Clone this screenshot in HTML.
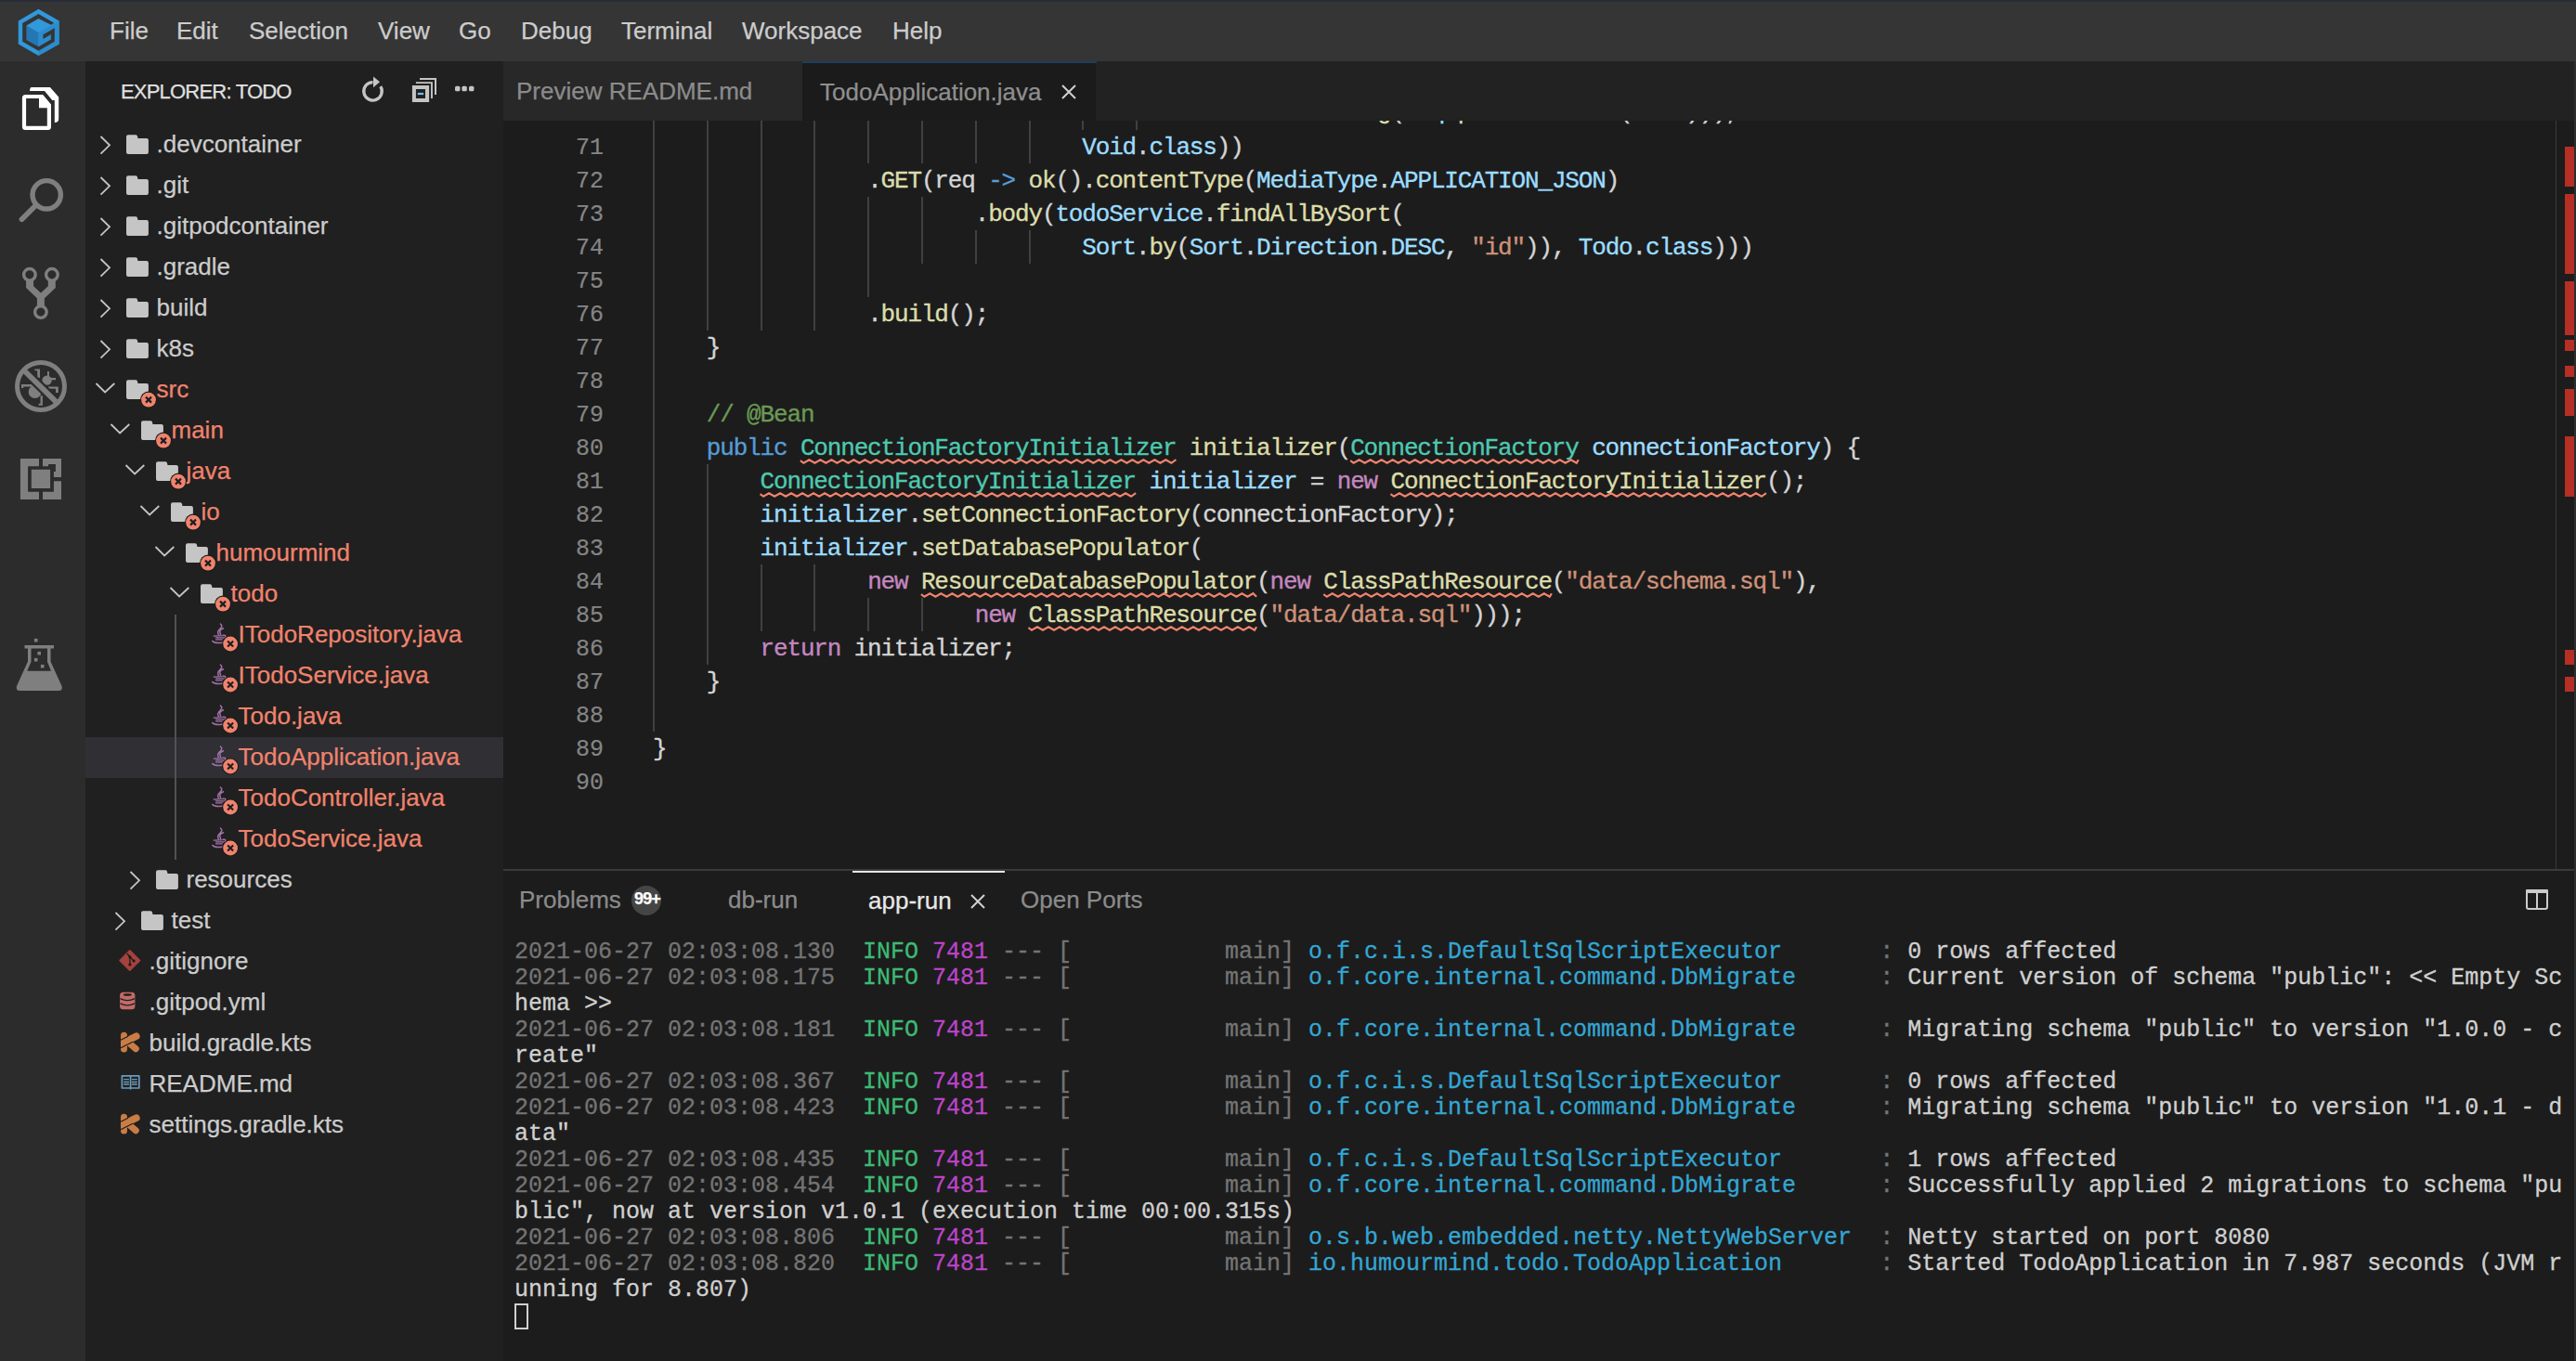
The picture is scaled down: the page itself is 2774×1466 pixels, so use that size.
<!DOCTYPE html>
<html><head><meta charset="utf-8"><style>
*{margin:0;padding:0;box-sizing:border-box}
html,body{width:2774px;height:1466px;overflow:hidden;background:#1c1c1c}
body{position:relative;font-family:"Liberation Sans",sans-serif}
.a{position:absolute}
.ui{font-family:"Liberation Sans",sans-serif;font-size:26px;white-space:pre;-webkit-text-stroke:0.25px currentColor}
.mono{font-family:"Liberation Mono",monospace;white-space:pre}
.cl{position:absolute;left:0;height:36px;line-height:36px;font-size:26px;letter-spacing:-1.158px;-webkit-text-stroke:0.35px currentColor}
.tl{position:absolute;left:0;height:28px;line-height:28px;font-size:25px;letter-spacing:-0.002px;-webkit-text-stroke:0.3px currentColor}
.sq{text-decoration:underline wavy #f48771;text-decoration-thickness:2px;text-underline-offset:6px;text-decoration-skip-ink:none}
</style></head><body>
<div class="a" style="left:0px;top:0px;width:2774px;height:2px;background:#282c3a;"></div>
<div class="a" style="left:0px;top:2px;width:2774px;height:64px;background:#353535;"></div>
<div class="a" style="left:0px;top:66px;width:92px;height:1400px;background:#2c2c2c;"></div>
<div class="a" style="left:92px;top:66px;width:450px;height:1400px;background:#202020;"></div>
<div class="a" style="left:542px;top:66px;width:2232px;height:64px;background:#222222;"></div>
<div class="a" style="left:542px;top:66px;width:322px;height:64px;background:#282828;"></div>
<div class="a" style="left:864px;top:66px;width:316px;height:64px;background:#1b1b1b;"></div>
<div class="a" style="left:864px;top:66px;width:317px;height:2px;background:#1c3e5c;"></div>
<div class="a" style="left:542px;top:130px;width:2232px;height:806px;background:#1c1c1c;"></div>
<div class="a" style="left:542px;top:936px;width:2232px;height:530px;background:#1c1c1c;"></div>
<div class="a" style="left:542px;top:936px;width:2230px;height:2px;background:#3a3a3a;"></div>
<div class="a" style="left:918px;top:938px;width:164px;height:2px;background:#e7e7e7;"></div>
<div class="a" style="left:2752px;top:130px;width:1px;height:806px;background:#3a3a3a;"></div>
<div class="a" style="left:2772px;top:66px;width:2px;height:1400px;background:#2e2e2e;"></div>
<div class="a" style="left:2762px;top:158px;width:10px;height:43px;background:#b52f25;"></div>
<div class="a" style="left:2762px;top:209px;width:10px;height:86px;background:#b52f25;"></div>
<div class="a" style="left:2762px;top:303px;width:10px;height:58px;background:#b52f25;"></div>
<div class="a" style="left:2762px;top:366px;width:10px;height:12px;background:#b52f25;"></div>
<div class="a" style="left:2762px;top:394px;width:10px;height:12px;background:#b52f25;"></div>
<div class="a" style="left:2762px;top:419px;width:10px;height:29px;background:#b52f25;"></div>
<div class="a" style="left:2762px;top:470px;width:10px;height:65px;background:#b52f25;"></div>
<div class="a" style="left:2762px;top:700px;width:10px;height:16px;background:#b52f25;"></div>
<div class="a" style="left:2762px;top:729px;width:10px;height:16px;background:#b52f25;"></div>
<div class="a" style="left:92px;top:794px;width:450px;height:44px;background:#2f2f34;"></div>
<div class="a" style="left:188px;top:662px;width:2px;height:264px;background:#525252;"></div>
<div class="a ui" style="left:118px;top:17px;line-height:32px;color:#cccccc">File</div>
<div class="a ui" style="left:190px;top:17px;line-height:32px;color:#cccccc">Edit</div>
<div class="a ui" style="left:268px;top:17px;line-height:32px;color:#cccccc">Selection</div>
<div class="a ui" style="left:407px;top:17px;line-height:32px;color:#cccccc">View</div>
<div class="a ui" style="left:494px;top:17px;line-height:32px;color:#cccccc">Go</div>
<div class="a ui" style="left:561px;top:17px;line-height:32px;color:#cccccc">Debug</div>
<div class="a ui" style="left:669px;top:17px;line-height:32px;color:#cccccc">Terminal</div>
<div class="a ui" style="left:799px;top:17px;line-height:32px;color:#cccccc">Workspace</div>
<div class="a ui" style="left:961px;top:17px;line-height:32px;color:#cccccc">Help</div>
<div class="a ui" style="left:130px;top:83px;font-size:22px;line-height:32px;letter-spacing:-0.8px;color:#e0e0e0">EXPLORER: TODO</div>
<div class="a ui" style="left:556px;top:82px;line-height:32px;color:#8b8b8b">Preview README.md</div>
<div class="a ui" style="left:883px;top:83px;line-height:32px;color:#8f8f8f">TodoApplication.java</div>
<div class="a ui" style="left:168.5px;top:139px;line-height:32px;color:#cccccc">.devcontainer</div>
<div class="a ui" style="left:168.5px;top:183px;line-height:32px;color:#cccccc">.git</div>
<div class="a ui" style="left:168.5px;top:227px;line-height:32px;color:#cccccc">.gitpodcontainer</div>
<div class="a ui" style="left:168.5px;top:271px;line-height:32px;color:#cccccc">.gradle</div>
<div class="a ui" style="left:168.5px;top:315px;line-height:32px;color:#cccccc">build</div>
<div class="a ui" style="left:168.5px;top:359px;line-height:32px;color:#cccccc">k8s</div>
<div class="a ui" style="left:168.5px;top:403px;line-height:32px;color:#f0836d">src</div>
<div class="a ui" style="left:184.5px;top:447px;line-height:32px;color:#f0836d">main</div>
<div class="a ui" style="left:200.5px;top:491px;line-height:32px;color:#f0836d">java</div>
<div class="a ui" style="left:216.5px;top:535px;line-height:32px;color:#f0836d">io</div>
<div class="a ui" style="left:232.5px;top:579px;line-height:32px;color:#f0836d">humourmind</div>
<div class="a ui" style="left:248.5px;top:623px;line-height:32px;color:#f0836d">todo</div>
<div class="a ui" style="left:256.5px;top:667px;line-height:32px;color:#f0836d">ITodoRepository.java</div>
<div class="a ui" style="left:256.5px;top:711px;line-height:32px;color:#f0836d">ITodoService.java</div>
<div class="a ui" style="left:256.5px;top:755px;line-height:32px;color:#f0836d">Todo.java</div>
<div class="a ui" style="left:256.5px;top:799px;line-height:32px;color:#f0836d">TodoApplication.java</div>
<div class="a ui" style="left:256.5px;top:843px;line-height:32px;color:#f0836d">TodoController.java</div>
<div class="a ui" style="left:256.5px;top:887px;line-height:32px;color:#f0836d">TodoService.java</div>
<div class="a ui" style="left:200.5px;top:931px;line-height:32px;color:#cccccc">resources</div>
<div class="a ui" style="left:184.5px;top:975px;line-height:32px;color:#cccccc">test</div>
<div class="a ui" style="left:160.5px;top:1019px;line-height:32px;color:#cccccc">.gitignore</div>
<div class="a ui" style="left:160.5px;top:1063px;line-height:32px;color:#cccccc">.gitpod.yml</div>
<div class="a ui" style="left:160.5px;top:1107px;line-height:32px;color:#cccccc">build.gradle.kts</div>
<div class="a ui" style="left:160.5px;top:1151px;line-height:32px;color:#cccccc">README.md</div>
<div class="a ui" style="left:160.5px;top:1195px;line-height:32px;color:#cccccc">settings.gradle.kts</div>
<div class="a" style="left:542px;top:130px;width:2210px;height:806px;overflow:hidden">
<div class="a mono" style="left:18px;width:90px;text-align:right;top:-24.5px;height:36px;line-height:36px;font-size:25px;-webkit-text-stroke:0.2px currentColor;color:#858585">70</div>
<div class="a" style="left:161.0px;top:-26px;width:2px;height:36px;background:#404040"></div>
<div class="a" style="left:218.8px;top:-26px;width:2px;height:36px;background:#404040"></div>
<div class="a" style="left:276.6px;top:-26px;width:2px;height:36px;background:#404040"></div>
<div class="a" style="left:334.4px;top:-26px;width:2px;height:36px;background:#404040"></div>
<div class="a" style="left:392.1px;top:-26px;width:2px;height:36px;background:#404040"></div>
<div class="a" style="left:449.9px;top:-26px;width:2px;height:36px;background:#404040"></div>
<div class="a" style="left:507.7px;top:-26px;width:2px;height:36px;background:#404040"></div>
<div class="a" style="left:565.5px;top:-26px;width:2px;height:36px;background:#404040"></div>
<div class="a" style="left:623.3px;top:-26px;width:2px;height:36px;background:#404040"></div>
<div class="a" style="left:681.1px;top:-26px;width:2px;height:36px;background:#404040"></div>
<div class="mono cl" style="left:161.00px;top:-27.0px"><span style="color:#d4d4d4">                                                      </span><span style="color:#dcdcaa">g</span><span style="color:#d4d4d4">(  </span><span style="color:#9cdcfe">q </span><span style="color:#dcdcaa">p           </span><span style="color:#d4d4d4">(    ))),</span></div>
<div class="a mono" style="left:18px;width:90px;text-align:right;top:11.5px;height:36px;line-height:36px;font-size:25px;-webkit-text-stroke:0.2px currentColor;color:#858585">71</div>
<div class="a" style="left:161.0px;top:10px;width:2px;height:36px;background:#404040"></div>
<div class="a" style="left:218.8px;top:10px;width:2px;height:36px;background:#404040"></div>
<div class="a" style="left:276.6px;top:10px;width:2px;height:36px;background:#404040"></div>
<div class="a" style="left:334.4px;top:10px;width:2px;height:36px;background:#404040"></div>
<div class="a" style="left:392.1px;top:10px;width:2px;height:36px;background:#404040"></div>
<div class="a" style="left:449.9px;top:10px;width:2px;height:36px;background:#404040"></div>
<div class="a" style="left:507.7px;top:10px;width:2px;height:36px;background:#404040"></div>
<div class="a" style="left:565.5px;top:10px;width:2px;height:36px;background:#404040"></div>
<div class="mono cl" style="left:623.27px;top:11.0px"><span style="color:#9cdcfe">Void</span><span style="color:#d4d4d4">.</span><span style="color:#9cdcfe">class</span><span style="color:#d4d4d4">))</span></div>
<div class="a mono" style="left:18px;width:90px;text-align:right;top:47.5px;height:36px;line-height:36px;font-size:25px;-webkit-text-stroke:0.2px currentColor;color:#858585">72</div>
<div class="a" style="left:161.0px;top:46px;width:2px;height:36px;background:#404040"></div>
<div class="a" style="left:218.8px;top:46px;width:2px;height:36px;background:#404040"></div>
<div class="a" style="left:276.6px;top:46px;width:2px;height:36px;background:#404040"></div>
<div class="a" style="left:334.4px;top:46px;width:2px;height:36px;background:#404040"></div>
<div class="mono cl" style="left:392.14px;top:47.0px"><span style="color:#d4d4d4">.</span><span style="color:#dcdcaa">GET</span><span style="color:#d4d4d4">(req </span><span style="color:#569cd6">-&gt;</span><span style="color:#d4d4d4"> </span><span style="color:#dcdcaa">ok</span><span style="color:#d4d4d4">().</span><span style="color:#dcdcaa">contentType</span><span style="color:#d4d4d4">(</span><span style="color:#9cdcfe">MediaType</span><span style="color:#d4d4d4">.</span><span style="color:#9cdcfe">APPLICATION_JSON</span><span style="color:#d4d4d4">)</span></div>
<div class="a mono" style="left:18px;width:90px;text-align:right;top:83.5px;height:36px;line-height:36px;font-size:25px;-webkit-text-stroke:0.2px currentColor;color:#858585">73</div>
<div class="a" style="left:161.0px;top:82px;width:2px;height:36px;background:#404040"></div>
<div class="a" style="left:218.8px;top:82px;width:2px;height:36px;background:#404040"></div>
<div class="a" style="left:276.6px;top:82px;width:2px;height:36px;background:#404040"></div>
<div class="a" style="left:334.4px;top:82px;width:2px;height:36px;background:#404040"></div>
<div class="a" style="left:392.1px;top:82px;width:2px;height:36px;background:#404040"></div>
<div class="a" style="left:449.9px;top:82px;width:2px;height:36px;background:#404040"></div>
<div class="mono cl" style="left:507.70px;top:83.0px"><span style="color:#d4d4d4">.</span><span style="color:#dcdcaa">body</span><span style="color:#d4d4d4">(</span><span style="color:#9cdcfe">todoService</span><span style="color:#d4d4d4">.</span><span style="color:#dcdcaa">findAllBySort</span><span style="color:#d4d4d4">(</span></div>
<div class="a mono" style="left:18px;width:90px;text-align:right;top:119.5px;height:36px;line-height:36px;font-size:25px;-webkit-text-stroke:0.2px currentColor;color:#858585">74</div>
<div class="a" style="left:161.0px;top:118px;width:2px;height:36px;background:#404040"></div>
<div class="a" style="left:218.8px;top:118px;width:2px;height:36px;background:#404040"></div>
<div class="a" style="left:276.6px;top:118px;width:2px;height:36px;background:#404040"></div>
<div class="a" style="left:334.4px;top:118px;width:2px;height:36px;background:#404040"></div>
<div class="a" style="left:392.1px;top:118px;width:2px;height:36px;background:#404040"></div>
<div class="a" style="left:449.9px;top:118px;width:2px;height:36px;background:#404040"></div>
<div class="a" style="left:507.7px;top:118px;width:2px;height:36px;background:#404040"></div>
<div class="a" style="left:565.5px;top:118px;width:2px;height:36px;background:#404040"></div>
<div class="mono cl" style="left:623.27px;top:119.0px"><span style="color:#9cdcfe">Sort</span><span style="color:#d4d4d4">.</span><span style="color:#dcdcaa">by</span><span style="color:#d4d4d4">(</span><span style="color:#9cdcfe">Sort</span><span style="color:#d4d4d4">.</span><span style="color:#9cdcfe">Direction</span><span style="color:#d4d4d4">.</span><span style="color:#9cdcfe">DESC</span><span style="color:#d4d4d4">, </span><span style="color:#ce9178">&quot;id&quot;</span><span style="color:#d4d4d4">)), </span><span style="color:#9cdcfe">Todo</span><span style="color:#d4d4d4">.</span><span style="color:#9cdcfe">class</span><span style="color:#d4d4d4">)))</span></div>
<div class="a mono" style="left:18px;width:90px;text-align:right;top:155.5px;height:36px;line-height:36px;font-size:25px;-webkit-text-stroke:0.2px currentColor;color:#858585">75</div>
<div class="a" style="left:161.0px;top:154px;width:2px;height:36px;background:#404040"></div>
<div class="a" style="left:218.8px;top:154px;width:2px;height:36px;background:#404040"></div>
<div class="a" style="left:276.6px;top:154px;width:2px;height:36px;background:#404040"></div>
<div class="a" style="left:334.4px;top:154px;width:2px;height:36px;background:#404040"></div>
<div class="a" style="left:392.1px;top:154px;width:2px;height:36px;background:#404040"></div>
<div class="a mono" style="left:18px;width:90px;text-align:right;top:191.5px;height:36px;line-height:36px;font-size:25px;-webkit-text-stroke:0.2px currentColor;color:#858585">76</div>
<div class="a" style="left:161.0px;top:190px;width:2px;height:36px;background:#404040"></div>
<div class="a" style="left:218.8px;top:190px;width:2px;height:36px;background:#404040"></div>
<div class="a" style="left:276.6px;top:190px;width:2px;height:36px;background:#404040"></div>
<div class="a" style="left:334.4px;top:190px;width:2px;height:36px;background:#404040"></div>
<div class="mono cl" style="left:392.14px;top:191.0px"><span style="color:#d4d4d4">.</span><span style="color:#dcdcaa">build</span><span style="color:#d4d4d4">();</span></div>
<div class="a mono" style="left:18px;width:90px;text-align:right;top:227.5px;height:36px;line-height:36px;font-size:25px;-webkit-text-stroke:0.2px currentColor;color:#858585">77</div>
<div class="a" style="left:161.0px;top:226px;width:2px;height:36px;background:#404040"></div>
<div class="mono cl" style="left:218.78px;top:227.0px"><span style="color:#d4d4d4">}</span></div>
<div class="a mono" style="left:18px;width:90px;text-align:right;top:263.5px;height:36px;line-height:36px;font-size:25px;-webkit-text-stroke:0.2px currentColor;color:#858585">78</div>
<div class="a" style="left:161.0px;top:262px;width:2px;height:36px;background:#404040"></div>
<div class="a mono" style="left:18px;width:90px;text-align:right;top:299.5px;height:36px;line-height:36px;font-size:25px;-webkit-text-stroke:0.2px currentColor;color:#858585">79</div>
<div class="a" style="left:161.0px;top:298px;width:2px;height:36px;background:#404040"></div>
<div class="mono cl" style="left:218.78px;top:299.0px"><span style="color:#6a9955">// @Bean</span></div>
<div class="a mono" style="left:18px;width:90px;text-align:right;top:335.5px;height:36px;line-height:36px;font-size:25px;-webkit-text-stroke:0.2px currentColor;color:#858585">80</div>
<div class="a" style="left:161.0px;top:334px;width:2px;height:36px;background:#404040"></div>
<div class="mono cl" style="left:218.78px;top:335.0px"><span style="color:#569cd6">public</span><span style="color:#d4d4d4"> </span><span style="color:#4ec9b0">ConnectionFactoryInitializer</span><span style="color:#d4d4d4"> </span><span style="color:#dcdcaa">initializer</span><span style="color:#d4d4d4">(</span><span style="color:#4ec9b0">ConnectionFactory</span><span style="color:#d4d4d4"> </span><span style="color:#9cdcfe">connectionFactory</span><span style="color:#d4d4d4">) {</span></div>
<div class="a mono" style="left:18px;width:90px;text-align:right;top:371.5px;height:36px;line-height:36px;font-size:25px;-webkit-text-stroke:0.2px currentColor;color:#858585">81</div>
<div class="a" style="left:161.0px;top:370px;width:2px;height:36px;background:#404040"></div>
<div class="a" style="left:218.8px;top:370px;width:2px;height:36px;background:#404040"></div>
<div class="mono cl" style="left:276.57px;top:371.0px"><span style="color:#4ec9b0">ConnectionFactoryInitializer</span><span style="color:#d4d4d4"> </span><span style="color:#9cdcfe">initializer</span><span style="color:#d4d4d4"> = </span><span style="color:#c586c0">new</span><span style="color:#d4d4d4"> </span><span style="color:#dcdcaa">ConnectionFactoryInitializer</span><span style="color:#d4d4d4">();</span></div>
<div class="a mono" style="left:18px;width:90px;text-align:right;top:407.5px;height:36px;line-height:36px;font-size:25px;-webkit-text-stroke:0.2px currentColor;color:#858585">82</div>
<div class="a" style="left:161.0px;top:406px;width:2px;height:36px;background:#404040"></div>
<div class="a" style="left:218.8px;top:406px;width:2px;height:36px;background:#404040"></div>
<div class="mono cl" style="left:276.57px;top:407.0px"><span style="color:#9cdcfe">initializer</span><span style="color:#d4d4d4">.</span><span style="color:#dcdcaa">setConnectionFactory</span><span style="color:#d4d4d4">(connectionFactory);</span></div>
<div class="a mono" style="left:18px;width:90px;text-align:right;top:443.5px;height:36px;line-height:36px;font-size:25px;-webkit-text-stroke:0.2px currentColor;color:#858585">83</div>
<div class="a" style="left:161.0px;top:442px;width:2px;height:36px;background:#404040"></div>
<div class="a" style="left:218.8px;top:442px;width:2px;height:36px;background:#404040"></div>
<div class="mono cl" style="left:276.57px;top:443.0px"><span style="color:#9cdcfe">initializer</span><span style="color:#d4d4d4">.</span><span style="color:#dcdcaa">setDatabasePopulator</span><span style="color:#d4d4d4">(</span></div>
<div class="a mono" style="left:18px;width:90px;text-align:right;top:479.5px;height:36px;line-height:36px;font-size:25px;-webkit-text-stroke:0.2px currentColor;color:#858585">84</div>
<div class="a" style="left:161.0px;top:478px;width:2px;height:36px;background:#404040"></div>
<div class="a" style="left:218.8px;top:478px;width:2px;height:36px;background:#404040"></div>
<div class="a" style="left:276.6px;top:478px;width:2px;height:36px;background:#404040"></div>
<div class="a" style="left:334.4px;top:478px;width:2px;height:36px;background:#404040"></div>
<div class="mono cl" style="left:392.14px;top:479.0px"><span style="color:#c586c0">new</span><span style="color:#d4d4d4"> </span><span style="color:#dcdcaa">ResourceDatabasePopulator</span><span style="color:#d4d4d4">(</span><span style="color:#c586c0">new</span><span style="color:#d4d4d4"> </span><span style="color:#dcdcaa">ClassPathResource</span><span style="color:#d4d4d4">(</span><span style="color:#ce9178">&quot;data/schema.sql&quot;</span><span style="color:#d4d4d4">),</span></div>
<div class="a mono" style="left:18px;width:90px;text-align:right;top:515.5px;height:36px;line-height:36px;font-size:25px;-webkit-text-stroke:0.2px currentColor;color:#858585">85</div>
<div class="a" style="left:161.0px;top:514px;width:2px;height:36px;background:#404040"></div>
<div class="a" style="left:218.8px;top:514px;width:2px;height:36px;background:#404040"></div>
<div class="a" style="left:276.6px;top:514px;width:2px;height:36px;background:#404040"></div>
<div class="a" style="left:334.4px;top:514px;width:2px;height:36px;background:#404040"></div>
<div class="a" style="left:392.1px;top:514px;width:2px;height:36px;background:#404040"></div>
<div class="a" style="left:449.9px;top:514px;width:2px;height:36px;background:#404040"></div>
<div class="mono cl" style="left:507.70px;top:515.0px"><span style="color:#c586c0">new</span><span style="color:#d4d4d4"> </span><span style="color:#dcdcaa">ClassPathResource</span><span style="color:#d4d4d4">(</span><span style="color:#ce9178">&quot;data/data.sql&quot;</span><span style="color:#d4d4d4">)));</span></div>
<div class="a mono" style="left:18px;width:90px;text-align:right;top:551.5px;height:36px;line-height:36px;font-size:25px;-webkit-text-stroke:0.2px currentColor;color:#858585">86</div>
<div class="a" style="left:161.0px;top:550px;width:2px;height:36px;background:#404040"></div>
<div class="a" style="left:218.8px;top:550px;width:2px;height:36px;background:#404040"></div>
<div class="mono cl" style="left:276.57px;top:551.0px"><span style="color:#c586c0">return</span><span style="color:#d4d4d4"> initializer;</span></div>
<div class="a mono" style="left:18px;width:90px;text-align:right;top:587.5px;height:36px;line-height:36px;font-size:25px;-webkit-text-stroke:0.2px currentColor;color:#858585">87</div>
<div class="a" style="left:161.0px;top:586px;width:2px;height:36px;background:#404040"></div>
<div class="mono cl" style="left:218.78px;top:587.0px"><span style="color:#d4d4d4">}</span></div>
<div class="a mono" style="left:18px;width:90px;text-align:right;top:623.5px;height:36px;line-height:36px;font-size:25px;-webkit-text-stroke:0.2px currentColor;color:#858585">88</div>
<div class="a" style="left:161.0px;top:622px;width:2px;height:36px;background:#404040"></div>
<div class="a mono" style="left:18px;width:90px;text-align:right;top:659.5px;height:36px;line-height:36px;font-size:25px;-webkit-text-stroke:0.2px currentColor;color:#858585">89</div>
<div class="mono cl" style="left:161.00px;top:659.0px"><span style="color:#d4d4d4">}</span></div>
<div class="a mono" style="left:18px;width:90px;text-align:right;top:695.5px;height:36px;line-height:36px;font-size:25px;-webkit-text-stroke:0.2px currentColor;color:#858585">90</div>
</div>
<div class="a ui" style="left:559px;top:953px;line-height:32px;color:#8b8b8b">Problems</div>
<div class="a" style="left:680px;top:954px;width:32px;height:32px;border-radius:16px;background:#454545"></div>
<div class="a ui" style="left:681px;top:952px;width:32px;text-align:center;font-size:18px;font-weight:bold;line-height:32px;color:#ffffff;letter-spacing:-0.8px">99+</div>
<div class="a ui" style="left:784px;top:953px;line-height:32px;color:#8b8b8b">db-run</div>
<div class="a ui" style="left:935px;top:954px;line-height:32px;color:#e8e8e8">app-run</div>
<div class="a ui" style="left:1099px;top:953px;line-height:32px;color:#8b8b8b">Open Ports</div>
<div class="mono tl" style="left:554px;top:1012px"><span style="color:#747474">2021-06-27 02:03:08.130</span><span style="color:#d0d0d0">  </span><span style="color:#3dba74">INFO</span><span style="color:#d0d0d0"> </span><span style="color:#bc45c8">7481</span><span style="color:#747474"> --- [           main] </span><span style="color:#34a6d3">o.f.c.i.s.DefaultSqlScriptExecutor      </span><span style="color:#747474"> : </span><span style="color:#d0d0d0">0 rows affected</span></div>
<div class="mono tl" style="left:554px;top:1040px"><span style="color:#747474">2021-06-27 02:03:08.175</span><span style="color:#d0d0d0">  </span><span style="color:#3dba74">INFO</span><span style="color:#d0d0d0"> </span><span style="color:#bc45c8">7481</span><span style="color:#747474"> --- [           main] </span><span style="color:#34a6d3">o.f.core.internal.command.DbMigrate     </span><span style="color:#747474"> : </span><span style="color:#d0d0d0">Current version of schema &quot;public&quot;: &lt;&lt; Empty Sc</span></div>
<div class="mono tl" style="left:554px;top:1068px"><span style="color:#d0d0d0">hema &gt;&gt;</span></div>
<div class="mono tl" style="left:554px;top:1096px"><span style="color:#747474">2021-06-27 02:03:08.181</span><span style="color:#d0d0d0">  </span><span style="color:#3dba74">INFO</span><span style="color:#d0d0d0"> </span><span style="color:#bc45c8">7481</span><span style="color:#747474"> --- [           main] </span><span style="color:#34a6d3">o.f.core.internal.command.DbMigrate     </span><span style="color:#747474"> : </span><span style="color:#d0d0d0">Migrating schema &quot;public&quot; to version &quot;1.0.0 - c</span></div>
<div class="mono tl" style="left:554px;top:1124px"><span style="color:#d0d0d0">reate&quot;</span></div>
<div class="mono tl" style="left:554px;top:1152px"><span style="color:#747474">2021-06-27 02:03:08.367</span><span style="color:#d0d0d0">  </span><span style="color:#3dba74">INFO</span><span style="color:#d0d0d0"> </span><span style="color:#bc45c8">7481</span><span style="color:#747474"> --- [           main] </span><span style="color:#34a6d3">o.f.c.i.s.DefaultSqlScriptExecutor      </span><span style="color:#747474"> : </span><span style="color:#d0d0d0">0 rows affected</span></div>
<div class="mono tl" style="left:554px;top:1180px"><span style="color:#747474">2021-06-27 02:03:08.423</span><span style="color:#d0d0d0">  </span><span style="color:#3dba74">INFO</span><span style="color:#d0d0d0"> </span><span style="color:#bc45c8">7481</span><span style="color:#747474"> --- [           main] </span><span style="color:#34a6d3">o.f.core.internal.command.DbMigrate     </span><span style="color:#747474"> : </span><span style="color:#d0d0d0">Migrating schema &quot;public&quot; to version &quot;1.0.1 - d</span></div>
<div class="mono tl" style="left:554px;top:1208px"><span style="color:#d0d0d0">ata&quot;</span></div>
<div class="mono tl" style="left:554px;top:1236px"><span style="color:#747474">2021-06-27 02:03:08.435</span><span style="color:#d0d0d0">  </span><span style="color:#3dba74">INFO</span><span style="color:#d0d0d0"> </span><span style="color:#bc45c8">7481</span><span style="color:#747474"> --- [           main] </span><span style="color:#34a6d3">o.f.c.i.s.DefaultSqlScriptExecutor      </span><span style="color:#747474"> : </span><span style="color:#d0d0d0">1 rows affected</span></div>
<div class="mono tl" style="left:554px;top:1264px"><span style="color:#747474">2021-06-27 02:03:08.454</span><span style="color:#d0d0d0">  </span><span style="color:#3dba74">INFO</span><span style="color:#d0d0d0"> </span><span style="color:#bc45c8">7481</span><span style="color:#747474"> --- [           main] </span><span style="color:#34a6d3">o.f.core.internal.command.DbMigrate     </span><span style="color:#747474"> : </span><span style="color:#d0d0d0">Successfully applied 2 migrations to schema &quot;pu</span></div>
<div class="mono tl" style="left:554px;top:1292px"><span style="color:#d0d0d0">blic&quot;, now at version v1.0.1 (execution time 00:00.315s)</span></div>
<div class="mono tl" style="left:554px;top:1320px"><span style="color:#747474">2021-06-27 02:03:08.806</span><span style="color:#d0d0d0">  </span><span style="color:#3dba74">INFO</span><span style="color:#d0d0d0"> </span><span style="color:#bc45c8">7481</span><span style="color:#747474"> --- [           main] </span><span style="color:#34a6d3">o.s.b.web.embedded.netty.NettyWebServer </span><span style="color:#747474"> : </span><span style="color:#d0d0d0">Netty started on port 8080</span></div>
<div class="mono tl" style="left:554px;top:1348px"><span style="color:#747474">2021-06-27 02:03:08.820</span><span style="color:#d0d0d0">  </span><span style="color:#3dba74">INFO</span><span style="color:#d0d0d0"> </span><span style="color:#bc45c8">7481</span><span style="color:#747474"> --- [           main] </span><span style="color:#34a6d3">io.humourmind.todo.TodoApplication      </span><span style="color:#747474"> : </span><span style="color:#d0d0d0">Started TodoApplication in 7.987 seconds (JVM r</span></div>
<div class="mono tl" style="left:554px;top:1376px"><span style="color:#d0d0d0">unning for 8.807)</span></div>
<div class="a" style="left:554px;top:1404px;width:15px;height:28px;border:2px solid #d0d0d0"></div>
<svg class="a" style="left:0;top:0" width="2774" height="1466" viewBox="0 0 2774 1466">
<path d="M41.5,9.8 L63.7,22.4 L63.7,47.6 L41.5,60.1 L19.75,47.6 L19.75,22.4 Z" fill="#3198da"/>
<path d="M41.5,35 L41.5,50.3 L28.5,42.9 L28.5,27.5 Z" fill="#2577b3"/>
<path d="M41.5,35 L41.5,60.1 L63.7,47.6 L63.7,22.4 Z" fill="#2a88c8" opacity="0.7"/>
<path d="M41.5,15 L58.3,24.8 L55,26.7 L41.5,20.1 L28.5,27.5 L28.5,42.9 L41.5,50.3 L54.9,42.6 L54.9,37.1 L46.4,42 L46.4,37.3 L54.9,32.4 L58.8,30.1 L58.8,44.8 L41.5,54.8 L24.2,44.8 L24.2,25 Z" fill="#353535"/>
<path d="M34,93.9 H53.9 L63.2,104.5 V128 Q63.2,132 58.8,132 V108 H56.3 L48,97.9 H32.1 Q32.1,93.9 34,93.9 Z" fill="#ffffff"/>
<path fill-rule="evenodd" d="M27.4,101.9 H46.2 L55,112.5 V136.5 Q55,140 51.5,140 H27.4 Q23.9,140 23.9,136.5 V105.4 Q23.9,101.9 27.4,101.9 Z M28.1,106.1 V135.8 H50.8 V116.2 H42 V106.1 Z" fill="#ffffff"/>
<circle cx="50.2" cy="209.8" r="15.2" fill="none" stroke="#7f7f7f" stroke-width="5.4"/>
<line x1="38.5" y1="221.2" x2="23.5" y2="236.2" stroke="#7f7f7f" stroke-width="5.7" stroke-linecap="round"/>
<circle cx="31.9" cy="295.8" r="6.3" fill="none" stroke="#7f7f7f" stroke-width="3.4"/>
<circle cx="55.9" cy="295.8" r="6.3" fill="none" stroke="#7f7f7f" stroke-width="3.4"/>
<circle cx="43.9" cy="336.1" r="6.3" fill="none" stroke="#7f7f7f" stroke-width="3.4"/>
<path d="M28.1,301 H36.1 V308.2 L44,315.5 L51.8,308.2 V301 H59.8 V309.9 L47.9,321.3 V330 H39.9 V321.3 L28.1,309.9 Z" fill="#7f7f7f"/>
<circle cx="50.6" cy="409.6" r="5.2" fill="#7f7f7f"/>
<circle cx="37.6" cy="422" r="6.9" fill="#7f7f7f"/>
<path d="M23,414 H35.5 V416.4 H25.2 V418 H23 Z M37.4,397.4 H43 V407 H40.2 V399.2 H37.4 Z M51,400 H52.9 V406 H51 Z M54,407 H60 V409.2 H54 Z M52,416.4 H62.8 V423 H60 V418.8 H52 Z M43.5,426.3 H45.9 V436.7 H41.6 V434.8 H43.5 Z" fill="#7f7f7f"/>
<line x1="26.1" y1="399.3" x2="60.2" y2="432.6" stroke="#2c2c2c" stroke-width="10.5"/>
<circle cx="44" cy="416" r="25.5" fill="none" stroke="#7f7f7f" stroke-width="5"/>
<line x1="26.1" y1="399.3" x2="60.2" y2="432.6" stroke="#7f7f7f" stroke-width="5.8"/>
<path d="M21.9,493.9 H42 V502.3 H30.1 V529.7 H42 V538 H21.9 Z M46,529.7 H57.9 V518.2 H66 V538 H46 Z M46,493.9 H66 V514 H57.9 V508 H59.9 V500.1 H52.1 V502.3 H46 Z M33.8,505.8 H54.1 V526.1 H33.8 Z" fill="#7f7f7f"/>
<path d="M26.5,695.1 H58 V698.5 H54.5 V712.5 L66.5,739 Q68,744 63,744 H21.5 Q16.5,744 18,739 L30,712.5 V698.5 H26.5 Z M33.5,698.5 V713 L29.2,722.7 H55 L51,713 V698.5 Z" fill="#7f7f7f" fill-rule="evenodd"/>
<rect x="36.900000000000006" y="687.9000000000001" width="3.6" height="3.6" fill="#7f7f7f"/>
<rect x="40.400000000000006" y="701.9000000000001" width="3.6" height="3.6" fill="#7f7f7f"/>
<rect x="36.900000000000006" y="708.9000000000001" width="3.6" height="3.6" fill="#7f7f7f"/>
<rect x="43.900000000000006" y="715.9000000000001" width="3.6" height="3.6" fill="#7f7f7f"/>
<path d="M409.8,93.2 A9.75,9.75 0 1 1 401.5,88.55" fill="none" stroke="#c5c5c5" stroke-width="3.3"/>
<path d="M402,82.5 L409,88.3 L402,94.2 Z" fill="#c5c5c5"/>
<path fill-rule="evenodd" d="M443.9,92 H462.1 V110 H443.9 Z M447.9,96.1 V105.9 H458 V96.1 Z" fill="#c5c5c5"/>
<rect x="449.8" y="99.9" width="6.3" height="2.2" fill="#75beff"/>
<path d="M447.9,88.2 H465.9 V105.9 H464 V90.1 H447.9 Z" fill="#c5c5c5"/>
<path d="M452,84 H470 V102 H468 V86 H452 Z" fill="#c5c5c5"/>
<rect x="490" y="92.8" width="5.4" height="5.5" rx="1.5" fill="#c5c5c5"/>
<rect x="497.4" y="92.8" width="5.4" height="5.5" rx="1.5" fill="#c5c5c5"/>
<rect x="505" y="92.8" width="5.4" height="5.5" rx="1.5" fill="#c5c5c5"/>
<path d="M1144,92 L1158,106 M1158,92 L1144,106" stroke="#d0d0d0" stroke-width="2"/>
<path d="M1046,964 L1060,978 M1060,964 L1046,978" stroke="#d0d0d0" stroke-width="2"/>
<rect x="2721" y="959" width="22" height="20" rx="2" fill="none" stroke="#cccccc" stroke-width="2"/>
<rect x="2720" y="958" width="24" height="4" rx="1" fill="#cccccc"/>
<rect x="2731" y="959" width="2" height="20" fill="#cccccc"/>
<polyline points="861.9,496.2 865.4,498.8 871.4,495.2 877.4,498.8 883.4,495.2 889.4,498.8 895.4,495.2 901.4,498.8 907.4,495.2 913.4,498.8 919.4,495.2 925.4,498.8 931.4,495.2 937.4,498.8 943.4,495.2 949.4,498.8 955.4,495.2 961.4,498.8 967.4,495.2 973.4,498.8 979.4,495.2 985.4,498.8 991.4,495.2 997.4,498.8 1003.4,495.2 1009.4,498.8 1015.4,495.2 1021.4,498.8 1027.4,495.2 1033.4,498.8 1039.4,495.2 1045.4,498.8 1051.4,495.2 1057.4,498.8 1063.4,495.2 1069.4,498.8 1075.4,495.2 1081.4,498.8 1087.4,495.2 1093.4,498.8 1099.4,495.2 1105.4,498.8 1111.4,495.2 1117.4,498.8 1123.4,495.2 1129.4,498.8 1135.4,495.2 1141.4,498.8 1147.4,495.2 1153.4,498.8 1159.4,495.2 1165.4,498.8 1171.4,495.2 1177.4,498.8 1183.4,495.2 1189.4,498.8 1195.4,495.2 1201.4,498.8 1207.4,495.2 1213.4,498.8 1219.4,495.2 1225.4,498.8 1231.4,495.2 1237.4,498.8 1243.4,495.2 1249.4,498.8 1255.4,495.2 1261.4,498.8 1266.4,495.2" fill="none" stroke="#f0836d" stroke-width="2.2" stroke-linejoin="miter"/>
<polyline points="1454.2,496.2 1457.7,498.8 1463.7,495.2 1469.7,498.8 1475.7,495.2 1481.7,498.8 1487.7,495.2 1493.7,498.8 1499.7,495.2 1505.7,498.8 1511.7,495.2 1517.7,498.8 1523.7,495.2 1529.7,498.8 1535.7,495.2 1541.7,498.8 1547.7,495.2 1553.7,498.8 1559.7,495.2 1565.7,498.8 1571.7,495.2 1577.7,498.8 1583.7,495.2 1589.7,498.8 1595.7,495.2 1601.7,498.8 1607.7,495.2 1613.7,498.8 1619.7,495.2 1625.7,498.8 1631.7,495.2 1637.7,498.8 1643.7,495.2 1649.7,498.8 1655.7,495.2 1661.7,498.8 1667.7,495.2 1673.7,498.8 1679.7,495.2 1685.7,498.8 1691.7,495.2 1697.7,498.8 1699.8,495.2" fill="none" stroke="#f0836d" stroke-width="2.2" stroke-linejoin="miter"/>
<polyline points="818.6,532.2 822.1,534.8 828.1,531.2 834.1,534.8 840.1,531.2 846.1,534.8 852.1,531.2 858.1,534.8 864.1,531.2 870.1,534.8 876.1,531.2 882.1,534.8 888.1,531.2 894.1,534.8 900.1,531.2 906.1,534.8 912.1,531.2 918.1,534.8 924.1,531.2 930.1,534.8 936.1,531.2 942.1,534.8 948.1,531.2 954.1,534.8 960.1,531.2 966.1,534.8 972.1,531.2 978.1,534.8 984.1,531.2 990.1,534.8 996.1,531.2 1002.1,534.8 1008.1,531.2 1014.1,534.8 1020.1,531.2 1026.1,534.8 1032.1,531.2 1038.1,534.8 1044.1,531.2 1050.1,534.8 1056.1,531.2 1062.1,534.8 1068.1,531.2 1074.1,534.8 1080.1,531.2 1086.1,534.8 1092.1,531.2 1098.1,534.8 1104.1,531.2 1110.1,534.8 1116.1,531.2 1122.1,534.8 1128.1,531.2 1134.1,534.8 1140.1,531.2 1146.1,534.8 1152.1,531.2 1158.1,534.8 1164.1,531.2 1170.1,534.8 1176.1,531.2 1182.1,534.8 1188.1,531.2 1194.1,534.8 1200.1,531.2 1206.1,534.8 1212.1,531.2 1218.1,534.8 1223.1,531.2" fill="none" stroke="#f0836d" stroke-width="2.2" stroke-linejoin="miter"/>
<polyline points="1497.5,532.2 1501.0,534.8 1507.0,531.2 1513.0,534.8 1519.0,531.2 1525.0,534.8 1531.0,531.2 1537.0,534.8 1543.0,531.2 1549.0,534.8 1555.0,531.2 1561.0,534.8 1567.0,531.2 1573.0,534.8 1579.0,531.2 1585.0,534.8 1591.0,531.2 1597.0,534.8 1603.0,531.2 1609.0,534.8 1615.0,531.2 1621.0,534.8 1627.0,531.2 1633.0,534.8 1639.0,531.2 1645.0,534.8 1651.0,531.2 1657.0,534.8 1663.0,531.2 1669.0,534.8 1675.0,531.2 1681.0,534.8 1687.0,531.2 1693.0,534.8 1699.0,531.2 1705.0,534.8 1711.0,531.2 1717.0,534.8 1723.0,531.2 1729.0,534.8 1735.0,531.2 1741.0,534.8 1747.0,531.2 1753.0,534.8 1759.0,531.2 1765.0,534.8 1771.0,531.2 1777.0,534.8 1783.0,531.2 1789.0,534.8 1795.0,531.2 1801.0,534.8 1807.0,531.2 1813.0,534.8 1819.0,531.2 1825.0,534.8 1831.0,531.2 1837.0,534.8 1843.0,531.2 1849.0,534.8 1855.0,531.2 1861.0,534.8 1867.0,531.2 1873.0,534.8 1879.0,531.2 1885.0,534.8 1891.0,531.2 1897.0,534.8 1902.0,531.2" fill="none" stroke="#f0836d" stroke-width="2.2" stroke-linejoin="miter"/>
<polyline points="991.9,640.2 995.4,642.8 1001.4,639.2 1007.4,642.8 1013.4,639.2 1019.4,642.8 1025.4,639.2 1031.4,642.8 1037.4,639.2 1043.4,642.8 1049.4,639.2 1055.4,642.8 1061.4,639.2 1067.4,642.8 1073.4,639.2 1079.4,642.8 1085.4,639.2 1091.4,642.8 1097.4,639.2 1103.4,642.8 1109.4,639.2 1115.4,642.8 1121.4,639.2 1127.4,642.8 1133.4,639.2 1139.4,642.8 1145.4,639.2 1151.4,642.8 1157.4,639.2 1163.4,642.8 1169.4,639.2 1175.4,642.8 1181.4,639.2 1187.4,642.8 1193.4,639.2 1199.4,642.8 1205.4,639.2 1211.4,642.8 1217.4,639.2 1223.4,642.8 1229.4,639.2 1235.4,642.8 1241.4,639.2 1247.4,642.8 1253.4,639.2 1259.4,642.8 1265.4,639.2 1271.4,642.8 1277.4,639.2 1283.4,642.8 1289.4,639.2 1295.4,642.8 1301.4,639.2 1307.4,642.8 1313.4,639.2 1319.4,642.8 1325.4,639.2 1331.4,642.8 1337.4,639.2 1343.4,642.8 1349.4,639.2 1353.1,642.8" fill="none" stroke="#f0836d" stroke-width="2.2" stroke-linejoin="miter"/>
<polyline points="1425.3,640.2 1428.8,642.8 1434.8,639.2 1440.8,642.8 1446.8,639.2 1452.8,642.8 1458.8,639.2 1464.8,642.8 1470.8,639.2 1476.8,642.8 1482.8,639.2 1488.8,642.8 1494.8,639.2 1500.8,642.8 1506.8,639.2 1512.8,642.8 1518.8,639.2 1524.8,642.8 1530.8,639.2 1536.8,642.8 1542.8,639.2 1548.8,642.8 1554.8,639.2 1560.8,642.8 1566.8,639.2 1572.8,642.8 1578.8,639.2 1584.8,642.8 1590.8,639.2 1596.8,642.8 1602.8,639.2 1608.8,642.8 1614.8,639.2 1620.8,642.8 1626.8,639.2 1632.8,642.8 1638.8,639.2 1644.8,642.8 1650.8,639.2 1656.8,642.8 1662.8,639.2 1668.8,642.8 1670.9,639.2" fill="none" stroke="#f0836d" stroke-width="2.2" stroke-linejoin="miter"/>
<polyline points="1107.5,676.2 1111.0,678.8 1117.0,675.2 1123.0,678.8 1129.0,675.2 1135.0,678.8 1141.0,675.2 1147.0,678.8 1153.0,675.2 1159.0,678.8 1165.0,675.2 1171.0,678.8 1177.0,675.2 1183.0,678.8 1189.0,675.2 1195.0,678.8 1201.0,675.2 1207.0,678.8 1213.0,675.2 1219.0,678.8 1225.0,675.2 1231.0,678.8 1237.0,675.2 1243.0,678.8 1249.0,675.2 1255.0,678.8 1261.0,675.2 1267.0,678.8 1273.0,675.2 1279.0,678.8 1285.0,675.2 1291.0,678.8 1297.0,675.2 1303.0,678.8 1309.0,675.2 1315.0,678.8 1321.0,675.2 1327.0,678.8 1333.0,675.2 1339.0,678.8 1345.0,675.2 1351.0,678.8 1353.1,675.2" fill="none" stroke="#f0836d" stroke-width="2.2" stroke-linejoin="miter"/>
<path d="M108.5,147 L118,156.3 L108.5,165.6" fill="none" stroke="#c5c5c5" stroke-width="1.8"/>
<path d="M138,145.3 H146.5 Q147.5,145.3 148,146.8 L148.5,149.0 H157.9 Q159.9,149.0 159.9,151.0 V164.0 Q159.9,166.0 157.9,166.0 H138 Q136,166.0 136,164.0 V147.3 Q136,145.3 138,145.3 Z" fill="#c5c5c5"/>
<path d="M108.5,191 L118,200.3 L108.5,209.6" fill="none" stroke="#c5c5c5" stroke-width="1.8"/>
<path d="M138,189.3 H146.5 Q147.5,189.3 148,190.8 L148.5,193.0 H157.9 Q159.9,193.0 159.9,195.0 V208.0 Q159.9,210.0 157.9,210.0 H138 Q136,210.0 136,208.0 V191.3 Q136,189.3 138,189.3 Z" fill="#c5c5c5"/>
<path d="M108.5,235 L118,244.3 L108.5,253.6" fill="none" stroke="#c5c5c5" stroke-width="1.8"/>
<path d="M138,233.3 H146.5 Q147.5,233.3 148,234.8 L148.5,237.0 H157.9 Q159.9,237.0 159.9,239.0 V252.0 Q159.9,254.0 157.9,254.0 H138 Q136,254.0 136,252.0 V235.3 Q136,233.3 138,233.3 Z" fill="#c5c5c5"/>
<path d="M108.5,279 L118,288.3 L108.5,297.6" fill="none" stroke="#c5c5c5" stroke-width="1.8"/>
<path d="M138,277.3 H146.5 Q147.5,277.3 148,278.8 L148.5,281.0 H157.9 Q159.9,281.0 159.9,283.0 V296.0 Q159.9,298.0 157.9,298.0 H138 Q136,298.0 136,296.0 V279.3 Q136,277.3 138,277.3 Z" fill="#c5c5c5"/>
<path d="M108.5,323 L118,332.3 L108.5,341.6" fill="none" stroke="#c5c5c5" stroke-width="1.8"/>
<path d="M138,321.3 H146.5 Q147.5,321.3 148,322.8 L148.5,325.0 H157.9 Q159.9,325.0 159.9,327.0 V340.0 Q159.9,342.0 157.9,342.0 H138 Q136,342.0 136,340.0 V323.3 Q136,321.3 138,321.3 Z" fill="#c5c5c5"/>
<path d="M108.5,367 L118,376.3 L108.5,385.6" fill="none" stroke="#c5c5c5" stroke-width="1.8"/>
<path d="M138,365.3 H146.5 Q147.5,365.3 148,366.8 L148.5,369.0 H157.9 Q159.9,369.0 159.9,371.0 V384.0 Q159.9,386.0 157.9,386.0 H138 Q136,386.0 136,384.0 V367.3 Q136,365.3 138,365.3 Z" fill="#c5c5c5"/>
<path d="M103.5,413 L113.1,422.5 L123.3,413" fill="none" stroke="#c5c5c5" stroke-width="1.8"/>
<path d="M138,409.3 H146.5 Q147.5,409.3 148,410.8 L148.5,413.0 H157.9 Q159.9,413.0 159.9,415.0 V428.0 Q159.9,430.0 157.9,430.0 H138 Q136,430.0 136,428.0 V411.3 Q136,409.3 138,409.3 Z" fill="#c5c5c5"/>
<circle cx="160" cy="430.6" r="9" fill="#1a1a1a"/>
<circle cx="160" cy="430.6" r="7.9" fill="#f0836d"/>
<path d="M157,427.6 L163,433.6 M163,427.6 L157,433.6" stroke="#1f1f1f" stroke-width="2.2"/>
<path d="M119.5,457 L129.1,466.5 L139.3,457" fill="none" stroke="#c5c5c5" stroke-width="1.8"/>
<path d="M154,453.3 H162.5 Q163.5,453.3 164,454.8 L164.5,457.0 H173.9 Q175.9,457.0 175.9,459.0 V472.0 Q175.9,474.0 173.9,474.0 H154 Q152,474.0 152,472.0 V455.3 Q152,453.3 154,453.3 Z" fill="#c5c5c5"/>
<circle cx="176" cy="474.6" r="9" fill="#1a1a1a"/>
<circle cx="176" cy="474.6" r="7.9" fill="#f0836d"/>
<path d="M173,471.6 L179,477.6 M179,471.6 L173,477.6" stroke="#1f1f1f" stroke-width="2.2"/>
<path d="M135.5,501 L145.1,510.5 L155.3,501" fill="none" stroke="#c5c5c5" stroke-width="1.8"/>
<path d="M170,497.3 H178.5 Q179.5,497.3 180,498.8 L180.5,501.0 H189.9 Q191.9,501.0 191.9,503.0 V516.0 Q191.9,518.0 189.9,518.0 H170 Q168,518.0 168,516.0 V499.3 Q168,497.3 170,497.3 Z" fill="#c5c5c5"/>
<circle cx="192" cy="518.6" r="9" fill="#1a1a1a"/>
<circle cx="192" cy="518.6" r="7.9" fill="#f0836d"/>
<path d="M189,515.6 L195,521.6 M195,515.6 L189,521.6" stroke="#1f1f1f" stroke-width="2.2"/>
<path d="M151.5,545 L161.1,554.5 L171.3,545" fill="none" stroke="#c5c5c5" stroke-width="1.8"/>
<path d="M186,541.3 H194.5 Q195.5,541.3 196,542.8 L196.5,545.0 H205.9 Q207.9,545.0 207.9,547.0 V560.0 Q207.9,562.0 205.9,562.0 H186 Q184,562.0 184,560.0 V543.3 Q184,541.3 186,541.3 Z" fill="#c5c5c5"/>
<circle cx="208" cy="562.6" r="9" fill="#1a1a1a"/>
<circle cx="208" cy="562.6" r="7.9" fill="#f0836d"/>
<path d="M205,559.6 L211,565.6 M211,559.6 L205,565.6" stroke="#1f1f1f" stroke-width="2.2"/>
<path d="M167.5,589 L177.1,598.5 L187.3,589" fill="none" stroke="#c5c5c5" stroke-width="1.8"/>
<path d="M202,585.3 H210.5 Q211.5,585.3 212,586.8 L212.5,589.0 H221.9 Q223.9,589.0 223.9,591.0 V604.0 Q223.9,606.0 221.9,606.0 H202 Q200,606.0 200,604.0 V587.3 Q200,585.3 202,585.3 Z" fill="#c5c5c5"/>
<circle cx="224" cy="606.6" r="9" fill="#1a1a1a"/>
<circle cx="224" cy="606.6" r="7.9" fill="#f0836d"/>
<path d="M221,603.6 L227,609.6 M227,603.6 L221,609.6" stroke="#1f1f1f" stroke-width="2.2"/>
<path d="M183.5,633 L193.1,642.5 L203.3,633" fill="none" stroke="#c5c5c5" stroke-width="1.8"/>
<path d="M218,629.3 H226.5 Q227.5,629.3 228,630.8 L228.5,633.0 H237.9 Q239.9,633.0 239.9,635.0 V648.0 Q239.9,650.0 237.9,650.0 H218 Q216,650.0 216,648.0 V631.3 Q216,629.3 218,629.3 Z" fill="#c5c5c5"/>
<circle cx="240" cy="650.6" r="9" fill="#1a1a1a"/>
<circle cx="240" cy="650.6" r="7.9" fill="#f0836d"/>
<path d="M237,647.6 L243,653.6 M243,647.6 L237,653.6" stroke="#1f1f1f" stroke-width="2.2"/>
<g transform="translate(0,0)" fill="none" stroke="#a072a8" stroke-linecap="round"><path stroke-width="1.5" d="M237.4,672.1 C239.5,673.5 239.3,675 236.8,677.5 C233.5,680.5 234.5,682.3 235.4,683.6 M240.6,676.7 C238.3,677.6 236.4,678.8 236.8,680.6 C237.1,682 237.6,682.8 237.6,683.6"/><path stroke-width="1.4" d="M230.2,685.1 C234,685 238,684.8 240.6,684.6 M240.4,684.2 C243.6,684 243.6,686.4 240.6,687.4 M232.6,686.9 H240.2 M232.6,688.9 H239.2 M228.7,690.5 C230.5,692.6 236,692.8 240.4,692"/></g>
<circle cx="248.1" cy="693.5" r="9" fill="#1a1a1a"/>
<circle cx="248.1" cy="693.5" r="7.9" fill="#f0836d"/>
<path d="M245.1,690.5 L251.1,696.5 M251.1,690.5 L245.1,696.5" stroke="#1f1f1f" stroke-width="2.2"/>
<g transform="translate(0,44)" fill="none" stroke="#a072a8" stroke-linecap="round"><path stroke-width="1.5" d="M237.4,672.1 C239.5,673.5 239.3,675 236.8,677.5 C233.5,680.5 234.5,682.3 235.4,683.6 M240.6,676.7 C238.3,677.6 236.4,678.8 236.8,680.6 C237.1,682 237.6,682.8 237.6,683.6"/><path stroke-width="1.4" d="M230.2,685.1 C234,685 238,684.8 240.6,684.6 M240.4,684.2 C243.6,684 243.6,686.4 240.6,687.4 M232.6,686.9 H240.2 M232.6,688.9 H239.2 M228.7,690.5 C230.5,692.6 236,692.8 240.4,692"/></g>
<circle cx="248.1" cy="737.5" r="9" fill="#1a1a1a"/>
<circle cx="248.1" cy="737.5" r="7.9" fill="#f0836d"/>
<path d="M245.1,734.5 L251.1,740.5 M251.1,734.5 L245.1,740.5" stroke="#1f1f1f" stroke-width="2.2"/>
<g transform="translate(0,88)" fill="none" stroke="#a072a8" stroke-linecap="round"><path stroke-width="1.5" d="M237.4,672.1 C239.5,673.5 239.3,675 236.8,677.5 C233.5,680.5 234.5,682.3 235.4,683.6 M240.6,676.7 C238.3,677.6 236.4,678.8 236.8,680.6 C237.1,682 237.6,682.8 237.6,683.6"/><path stroke-width="1.4" d="M230.2,685.1 C234,685 238,684.8 240.6,684.6 M240.4,684.2 C243.6,684 243.6,686.4 240.6,687.4 M232.6,686.9 H240.2 M232.6,688.9 H239.2 M228.7,690.5 C230.5,692.6 236,692.8 240.4,692"/></g>
<circle cx="248.1" cy="781.5" r="9" fill="#1a1a1a"/>
<circle cx="248.1" cy="781.5" r="7.9" fill="#f0836d"/>
<path d="M245.1,778.5 L251.1,784.5 M251.1,778.5 L245.1,784.5" stroke="#1f1f1f" stroke-width="2.2"/>
<g transform="translate(0,132)" fill="none" stroke="#a072a8" stroke-linecap="round"><path stroke-width="1.5" d="M237.4,672.1 C239.5,673.5 239.3,675 236.8,677.5 C233.5,680.5 234.5,682.3 235.4,683.6 M240.6,676.7 C238.3,677.6 236.4,678.8 236.8,680.6 C237.1,682 237.6,682.8 237.6,683.6"/><path stroke-width="1.4" d="M230.2,685.1 C234,685 238,684.8 240.6,684.6 M240.4,684.2 C243.6,684 243.6,686.4 240.6,687.4 M232.6,686.9 H240.2 M232.6,688.9 H239.2 M228.7,690.5 C230.5,692.6 236,692.8 240.4,692"/></g>
<circle cx="248.1" cy="825.5" r="9" fill="#1a1a1a"/>
<circle cx="248.1" cy="825.5" r="7.9" fill="#f0836d"/>
<path d="M245.1,822.5 L251.1,828.5 M251.1,822.5 L245.1,828.5" stroke="#1f1f1f" stroke-width="2.2"/>
<g transform="translate(0,176)" fill="none" stroke="#a072a8" stroke-linecap="round"><path stroke-width="1.5" d="M237.4,672.1 C239.5,673.5 239.3,675 236.8,677.5 C233.5,680.5 234.5,682.3 235.4,683.6 M240.6,676.7 C238.3,677.6 236.4,678.8 236.8,680.6 C237.1,682 237.6,682.8 237.6,683.6"/><path stroke-width="1.4" d="M230.2,685.1 C234,685 238,684.8 240.6,684.6 M240.4,684.2 C243.6,684 243.6,686.4 240.6,687.4 M232.6,686.9 H240.2 M232.6,688.9 H239.2 M228.7,690.5 C230.5,692.6 236,692.8 240.4,692"/></g>
<circle cx="248.1" cy="869.5" r="9" fill="#1a1a1a"/>
<circle cx="248.1" cy="869.5" r="7.9" fill="#f0836d"/>
<path d="M245.1,866.5 L251.1,872.5 M251.1,866.5 L245.1,872.5" stroke="#1f1f1f" stroke-width="2.2"/>
<g transform="translate(0,220)" fill="none" stroke="#a072a8" stroke-linecap="round"><path stroke-width="1.5" d="M237.4,672.1 C239.5,673.5 239.3,675 236.8,677.5 C233.5,680.5 234.5,682.3 235.4,683.6 M240.6,676.7 C238.3,677.6 236.4,678.8 236.8,680.6 C237.1,682 237.6,682.8 237.6,683.6"/><path stroke-width="1.4" d="M230.2,685.1 C234,685 238,684.8 240.6,684.6 M240.4,684.2 C243.6,684 243.6,686.4 240.6,687.4 M232.6,686.9 H240.2 M232.6,688.9 H239.2 M228.7,690.5 C230.5,692.6 236,692.8 240.4,692"/></g>
<circle cx="248.1" cy="913.5" r="9" fill="#1a1a1a"/>
<circle cx="248.1" cy="913.5" r="7.9" fill="#f0836d"/>
<path d="M245.1,910.5 L251.1,916.5 M251.1,910.5 L245.1,916.5" stroke="#1f1f1f" stroke-width="2.2"/>
<path d="M140.5,939 L150,948.3 L140.5,957.6" fill="none" stroke="#c5c5c5" stroke-width="1.8"/>
<path d="M170,937.3 H178.5 Q179.5,937.3 180,938.8 L180.5,941.0 H189.9 Q191.9,941.0 191.9,943.0 V956.0 Q191.9,958.0 189.9,958.0 H170 Q168,958.0 168,956.0 V939.3 Q168,937.3 170,937.3 Z" fill="#c5c5c5"/>
<path d="M124.5,983 L134,992.3 L124.5,1001.6" fill="none" stroke="#c5c5c5" stroke-width="1.8"/>
<path d="M154,981.3 H162.5 Q163.5,981.3 164,982.8 L164.5,985.0 H173.9 Q175.9,985.0 175.9,987.0 V1000.0 Q175.9,1002.0 173.9,1002.0 H154 Q152,1002.0 152,1000.0 V983.3 Q152,981.3 154,981.3 Z" fill="#c5c5c5"/>
<path d="M139.8,1023.8999999999999 L150.5,1034.6 L139.8,1045.1 L129.1,1034.6 Z" fill="#a4423d" stroke="#a4423d" stroke-width="1.6" stroke-linejoin="round"/>
<path d="M136.8,1027.0 L139.9,1030.8 V1039.0 M139.9,1030.8 L144.1,1035.0" stroke="#1e1e1e" stroke-width="1.3" fill="none"/>
<circle cx="139.9" cy="1030.8" r="1.6" fill="#1a1a1a"/><circle cx="144.1" cy="1035.0" r="1.6" fill="#1a1a1a"/><circle cx="139.9" cy="1039.0" r="1.6" fill="#1a1a1a"/>
<rect x="129.1" y="1068.8" width="16.3" height="18.5" rx="3.5" fill="#c26a6a"/>
<path d="M129.5,1075.6 Q137.3,1079.6 145,1075.6 M129.5,1080.9 Q137.3,1084.9 145,1080.9" stroke="#1e1e1e" stroke-width="1.3" fill="none"/>
<ellipse cx="137.3" cy="1071.5" rx="4.6" ry="1.3" fill="#1e1e1e"/>
<path d="M133.5,1115.3 V1129.9 M140,1124.4 L146.3,1129.7" stroke="#c97d45" stroke-width="7" stroke-linecap="round" fill="none"/>
<path d="M130,1120.25 L145.1,1112.7 A3.8,3.8 0 0 1 148.5,1119.5 L130,1128.75 Z" fill="#c97d45"/>
<path d="M130,1120.25 L138,1116.25 M130,1128.75 L143,1122.25" stroke="#1e1e1e" stroke-width="1.2" fill="none"/>
<path d="M131.4,1158.9 H140.6 V1172 H131.4 Z M140.6,1158.9 H149.8 V1172 H140.6 Z" fill="none" stroke="#6a9bbb" stroke-width="1.7" stroke-linejoin="round"/>
<path d="M140.6,1172 L140.6,1173.6" stroke="#6a9bbb" stroke-width="1.4"/>
<path d="M133.2,1162.7 H138.9 M142,1162.7 H147.8" stroke="#6a9bbb" stroke-width="1.3"/>
<path d="M133.2,1165.5 H138.9 M142,1165.5 H147.8" stroke="#6a9bbb" stroke-width="1.3"/>
<path d="M133.2,1168.0 H138.9 M142,1168.0 H147.8" stroke="#6a9bbb" stroke-width="1.3"/>
<path d="M133.5,1203.3 V1217.9 M140,1212.4 L146.3,1217.7" stroke="#c97d45" stroke-width="7" stroke-linecap="round" fill="none"/>
<path d="M130,1208.25 L145.1,1200.7 A3.8,3.8 0 0 1 148.5,1207.5 L130,1216.75 Z" fill="#c97d45"/>
<path d="M130,1208.25 L138,1204.25 M130,1216.75 L143,1210.25" stroke="#1e1e1e" stroke-width="1.2" fill="none"/>
</svg>
</body></html>
